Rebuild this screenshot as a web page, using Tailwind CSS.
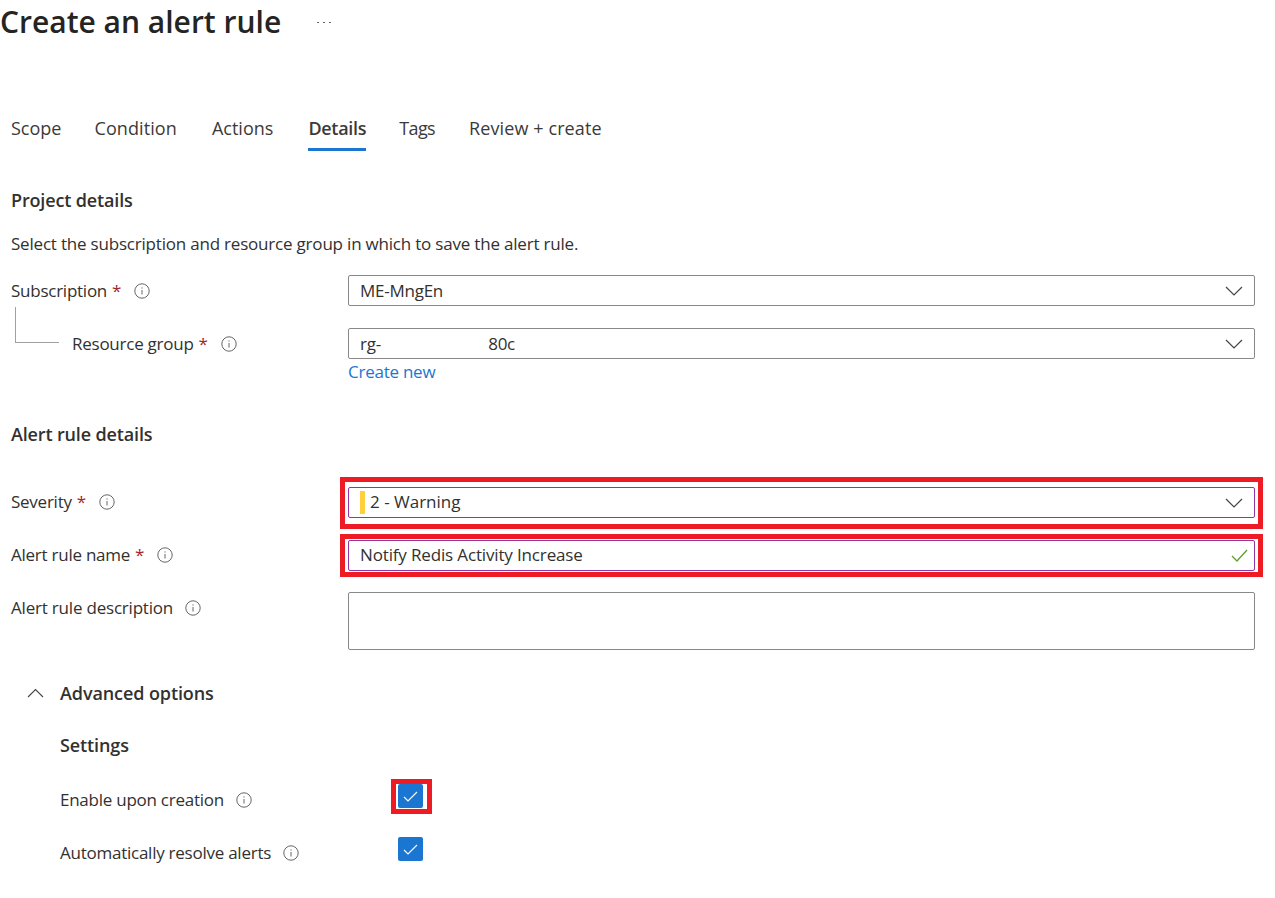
<!DOCTYPE html>
<html><head><meta charset="utf-8"><script src="https://cdn.jsdelivr.net/npm/@tailwindcss/browser@4"></script><title>Create an alert rule</title></head>
<body class="bg-white overflow-hidden">
<div class="w-[1275px] h-[898px] overflow-hidden font-['Open_Sans',sans-serif] text-[17px] tracking-[-0.25px] text-[#323130]">
  <header class="h-[44px] flex items-center">
    <h1 class="text-[30px] font-semibold tracking-normal leading-[44px] text-[#252423]">Create an alert rule</h1>
    <span class="ml-[36px] flex gap-[4px]"><i class="w-[2px] h-[1px] bg-[#666]"></i><i class="w-[2px] h-[1px] bg-[#666]"></i><i class="w-[2px] h-[1px] bg-[#666]"></i></span>
  </header>
  <nav class="mt-[62px] pl-[11px] h-[46px] flex text-[18px] tracking-normal text-[#3b3a39]">
    <a class="h-[45px] pt-[9px]">Scope</a><a class="h-[45px] pt-[9px] ml-[33px] tracking-[0.1px]">Condition</a><a class="h-[45px] pt-[9px] ml-[35px]">Actions</a>
    <a class="h-[45px] pt-[9px] ml-[35px] font-semibold tracking-[-0.3px] border-b-[3px] border-[#1b76d2]">Details</a><a class="h-[45px] pt-[9px] ml-[33px] tracking-[-0.6px]">Tags</a><a class="h-[45px] pt-[9px] ml-[34px] tracking-[0.1px]">Review + create</a>
  </nav>
  <main class="pl-[11px] pr-[20px]">
    <h2 class="mt-[36px] h-[24px] leading-[24px] text-[18px] tracking-[-0.15px] font-semibold">Project details</h2>
    <p class="mt-[20px] h-[24px] leading-[24px] tracking-[-0.2px]">Select the subscription and resource group in which to save the alert rule.</p>
    <div class="mt-[19px] flex items-center h-[31px] relative">
      <label class="w-[337px] flex items-center">Subscription <b class="ml-[5px] font-normal text-[#a4262c]">*</b>
        <svg class="ml-[13px]" width="16" height="16" viewBox="0 0 16 16" fill="none"><circle cx="8" cy="8" r="7.2" stroke="#666"/><path d="M8 7v4.5M8 4.4v1.2" stroke="#666"/></svg></label>
      <div class="flex-1 h-[31px] border border-[#8a8886] rounded-[2px] pl-[11px] pr-[11px] flex items-center justify-between"><span>ME-MngEn</span>
        <svg width="18" height="10" viewBox="0 0 18 10" fill="none"><path d="M1 1l8 8 8-8" stroke="#444" stroke-width="1.2"/></svg></div>
    </div>
    <div class="mt-[22px] flex items-center h-[31px] relative">
      <span class="absolute left-[4px] top-[-21px] w-[44px] h-[36px] border-l border-b border-[#a0a0a0]"></span>
      <label class="w-[337px] pl-[61px] flex items-center">Resource group <b class="ml-[5px] font-normal text-[#a4262c]">*</b>
        <svg class="ml-[13px]" width="16" height="16" viewBox="0 0 16 16" fill="none"><circle cx="8" cy="8" r="7.2" stroke="#666"/><path d="M8 7v4.5M8 4.4v1.2" stroke="#666"/></svg></label>
      <div class="flex-1 h-[31px] border border-[#8a8886] rounded-[2px] pl-[11px] pr-[11px] flex items-center justify-between"><span class="w-[155px] flex justify-between"><span>rg-</span><span>80c</span></span>
        <svg width="18" height="10" viewBox="0 0 18 10" fill="none"><path d="M1 1l8 8 8-8" stroke="#444" stroke-width="1.2"/></svg></div>
    </div>
    <a class="block ml-[337px] mt-[1px] h-[24px] leading-[24px] text-[#1b76d2]">Create new</a>
    <h2 class="mt-[38px] h-[24px] leading-[24px] text-[18px] tracking-[-0.15px] font-semibold">Alert rule details</h2>
    <div class="mt-[41px] flex items-center h-[31px] relative">
      <span class="absolute left-[329px] top-[-10px] w-[923px] h-[52px] border-[5px] border-[#ed1c24]"></span>
      <label class="w-[337px] flex items-center pb-[2px]">Severity <b class="ml-[5px] font-normal text-[#a4262c]">*</b>
        <svg class="ml-[13px]" width="16" height="16" viewBox="0 0 16 16" fill="none"><circle cx="8" cy="8" r="7.2" stroke="#666"/><path d="M8 7v4.5M8 4.4v1.2" stroke="#666"/></svg></label>
      <div class="flex-1 h-[31px] border border-[#8e35a8] rounded-[2px] pl-[11px] pr-[11px] flex items-center justify-between"><span class="flex items-center tracking-normal"><i class="w-[5px] h-[23px] bg-[#ffd03c] mr-[5px]"></i><span class="pb-[2px]">2 - Warning</span></span>
        <svg width="18" height="10" viewBox="0 0 18 10" fill="none"><path d="M1 1l8 8 8-8" stroke="#444" stroke-width="1.2"/></svg></div>
    </div>
    <div class="mt-[22px] flex items-center h-[31px] relative">
      <span class="absolute left-[329px] top-[-6px] w-[923px] h-[43px] border-[5px] border-[#ed1c24]"></span>
      <label class="w-[337px] flex items-center pb-[2px]">Alert rule name <b class="ml-[5px] font-normal text-[#a4262c]">*</b>
        <svg class="ml-[13px]" width="16" height="16" viewBox="0 0 16 16" fill="none"><circle cx="8" cy="8" r="7.2" stroke="#666"/><path d="M8 7v4.5M8 4.4v1.2" stroke="#666"/></svg></label>
      <div class="flex-1 h-[31px] border border-[#8e35a8] rounded-[2px] pl-[11px] pr-[6px] flex items-center justify-between"><span class="pb-[2px] tracking-[-0.15px]">Notify Redis Activity Increase</span>
        <svg width="17" height="13" viewBox="0 0 17 13" fill="none"><path d="M1 7l5 5L16 1" stroke="#5da02e" stroke-width="1.3"/></svg></div>
    </div>
    <div class="mt-[21px] flex items-start h-[58px]">
      <label class="w-[337px] mt-[3px] flex items-center tracking-[-0.2px]">Alert rule description
        <svg class="ml-[12px]" width="16" height="16" viewBox="0 0 16 16" fill="none"><circle cx="8" cy="8" r="7.2" stroke="#666"/><path d="M8 7v4.5M8 4.4v1.2" stroke="#666"/></svg></label>
      <div class="flex-1 h-[58px] border border-[#8a8886] rounded-[2px]"></div>
    </div>
    <button class="mt-[31px] h-[24px] flex items-center font-semibold text-[18px] tracking-[-0.1px]">
      <svg class="ml-[16px] mr-[16px]" width="17" height="10" viewBox="0 0 17 10" fill="none"><path d="M1 9l7.5-7.5L16 9" stroke="#444" stroke-width="1.1"/></svg>Advanced options</button>
    <section class="pl-[49px]">
      <h3 class="mt-[28px] h-[24px] leading-[24px] text-[18px] tracking-[-0.1px] font-semibold">Settings</h3>
      <div class="mt-[27px] flex items-center h-[24px] relative">
        <span class="absolute left-[331px] top-[-5px] w-[41px] h-[35px] border-[5px] border-[#ed1c24]"></span>
        <label class="w-[338px] flex items-center relative top-[4px]">Enable upon creation
          <svg class="ml-[12px]" width="16" height="16" viewBox="0 0 16 16" fill="none"><circle cx="8" cy="8" r="7.2" stroke="#666"/><path d="M8 7v4.5M8 4.4v1.2" stroke="#666"/></svg></label>
        <span class="w-[25px] h-[24px] rounded-[2px] bg-[#1b76d2] flex items-center justify-center"><svg width="15" height="11" viewBox="0 0 15 11" fill="none"><path d="M1 6l4 4L14 1" stroke="#fff" stroke-width="1.1"/></svg></span>
      </div>
      <div class="mt-[29px] flex items-center h-[24px]">
        <label class="w-[338px] flex items-center relative top-[4px]">Automatically resolve alerts
          <svg class="ml-[12px]" width="16" height="16" viewBox="0 0 16 16" fill="none"><circle cx="8" cy="8" r="7.2" stroke="#666"/><path d="M8 7v4.5M8 4.4v1.2" stroke="#666"/></svg></label>
        <span class="w-[25px] h-[24px] rounded-[2px] bg-[#1b76d2] flex items-center justify-center"><svg width="15" height="11" viewBox="0 0 15 11" fill="none"><path d="M1 6l4 4L14 1" stroke="#fff" stroke-width="1.1"/></svg></span>
      </div>
    </section>
  </main>
</div>
</body></html>
